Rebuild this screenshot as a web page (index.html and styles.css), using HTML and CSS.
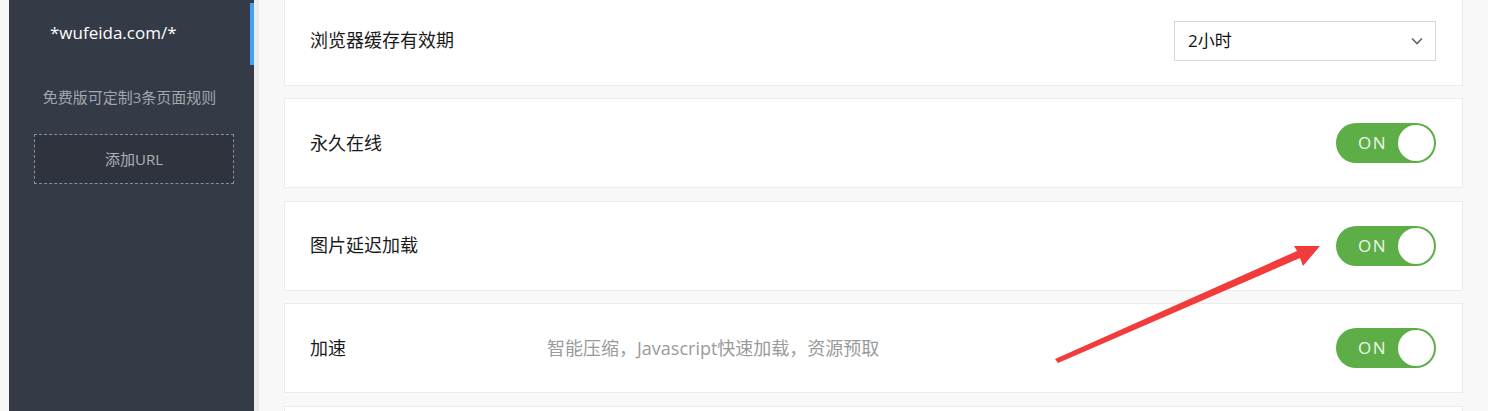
FILE: index.html
```html
<!DOCTYPE html>
<html lang="zh-CN">
<head>
<meta charset="utf-8">
<title>设置</title>
<link rel="stylesheet" href="styles.css">
</head>
<body>
<div class="page">
  <aside class="sidebar">
    <div class="site-item active">*wufeida.com/*</div>
    <p class="note">免费版可定制3条页面规则</p>
    <div class="add-url">添加URL</div>
  </aside>
  <div class="divider"></div>
  <main class="main">
    <section class="card">
      <div class="label">浏览器缓存有效期</div>
      <div class="select">
        <span>2小时</span>
        <svg class="chev" width="12" height="8" viewBox="0 0 12 8"><path d="M1 1.5 L6 6.5 L11 1.5" fill="none" stroke="#666" stroke-width="1.6"/></svg>
      </div>
    </section>
    <section class="card">
      <div class="label">永久在线</div>
      <div class="toggle"><span class="on">ON</span><span class="knob"></span></div>
    </section>
    <section class="card">
      <div class="label">图片延迟加载</div>
      <div class="toggle"><span class="on">ON</span><span class="knob"></span></div>
    </section>
    <section class="card">
      <div class="label fixed">加速</div>
      <div class="desc">智能压缩，Javascript快速加载，资源预取</div>
      <div class="toggle"><span class="on">ON</span><span class="knob"></span></div>
    </section>
    <section class="card"></section>
  </main>
  <svg class="arrow" width="1488" height="411" viewBox="0 0 1488 411">
    <polygon points="1055,359 1297,251 1294,246 1320,246 1303,266 1300,258 1058,363" fill="#f23b3b"/>
  </svg>
</div>
</body>
</html>
```

FILE: styles.css
```css
* { box-sizing: border-box; }
html, body {
  margin: 0;
  padding: 0;
  height: 411px;
  overflow: hidden;
  background: #f8f8f8;
  font-family: "Open Sans", "Noto Sans CJK SC", sans-serif;
}
.page {
  position: relative;
  display: flex;
  height: 411px;
  padding-left: 9px;
  background: #f7f7f7;
}
.sidebar {
  width: 245px;
  flex: none;
  background: #343a46;
  padding-top: 3px;
  display: flex;
  flex-direction: column;
  align-items: flex-start;
}
.site-item {
  align-self: stretch;
  height: 62px;
  padding-left: 41px;
  border-right: 4px solid #3fa3f3;
  color: #fff;
  font-size: 17px;
  line-height: 60px;
}
.note {
  align-self: stretch;
  margin: 22px 4px 0 0;
  font-size: 15px;
  color: #a3a7ae;
  line-height: 20px;
  text-align: center;
}
.add-url {
  margin: 27px 0 0 25px;
  width: 200px;
  height: 50px;
  border: 1px dashed #8b8f97;
  background: #2e333e;
  color: #aeb1b7;
  font-size: 15px;
  line-height: 48px;
  text-align: center;
}
.divider {
  width: 5px;
  flex: none;
  background: #ececec;
}
.main {
  flex: 1;
  background: #f8f8f8;
  padding-left: 25px;
  margin-top: -4.5px;
  display: flex;
  flex-direction: column;
  gap: 12.67px;
}
.card {
  width: 1179px;
  height: 90px;
  flex: none;
  background: #fff;
  border: 1px solid #ececec;
  padding: 0 25px 3px;
  display: flex;
  align-items: center;
}
.label {
  flex: 1;
  font-size: 18px;
  color: #1a1a1a;
}
.label.fixed {
  flex: none;
  width: 237px;
}
.desc {
  flex: 1;
  font-size: 18px;
  color: #9a9a9a;
}
.select {
  width: 262px;
  height: 40px;
  margin: 3px 1px 0 0;
  border: 1px solid #d6d6d6;
  padding: 0 12px 3px 13px;
  display: flex;
  align-items: center;
  justify-content: space-between;
  font-size: 17px;
  color: #111;
}
.chev { display: block; margin-top: 3px; }
.toggle {
  position: relative;
  width: 100px;
  height: 40px;
  margin: 3px 1px 0 0;
  border-radius: 20px;
  background: #5dae47;
}
.on {
  position: absolute;
  left: 22px;
  top: 0;
  line-height: 40px;
  font-size: 17px;
  font-weight: 400;
  letter-spacing: 1.5px;
  color: #eef6ea;
}
.knob {
  position: absolute;
  right: 2px;
  top: 2px;
  width: 36px;
  height: 36px;
  border-radius: 50%;
  background: #fff;
}
.arrow {
  position: absolute;
  left: 0;
  top: 0;
  pointer-events: none;
}
```
